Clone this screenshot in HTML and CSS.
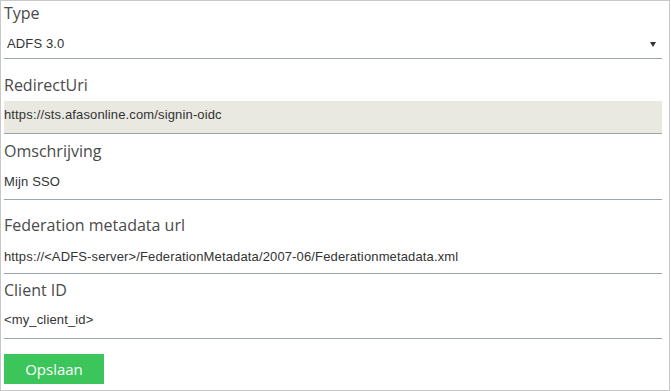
FILE: index.html
```html
<!DOCTYPE html>
<html>
<head>
<meta charset="utf-8">
<link rel="stylesheet" href="styles.css">
</head>
<body>
<div class="panel">
  <div class="field field-type">
    <div class="label">Type</div>
    <div class="value select">
      <span>ADFS 3.0</span>
      <span class="arrow"></span>
    </div>
  </div>
  <div class="field field-redirect">
    <div class="label">RedirectUri</div>
    <div class="value readonly">https://sts.afasonline.com/signin-oidc</div>
  </div>
  <div class="field field-desc">
    <div class="label">Omschrijving</div>
    <div class="value">Mijn SSO</div>
  </div>
  <div class="field field-meta">
    <div class="label">Federation metadata url</div>
    <div class="value">https://&lt;ADFS-server&gt;/FederationMetadata/2007-06/Federationmetadata.xml</div>
  </div>
  <div class="field field-client">
    <div class="label">Client ID</div>
    <div class="value">&lt;my_client_id&gt;</div>
  </div>
  <button class="btn">Opslaan</button>
</div>
</body>
</html>
```
FILE: styles.css
```css
html, body {
  margin: 0;
  padding: 0;
  background: #ffffff;
}
.panel {
  box-sizing: border-box;
  width: 670px;
  height: 391px;
  border: 1px solid #c8c8c8;
  padding: 1px 7px 0 3px;
}
.label {
  font-family: "Open Sans", "Liberation Sans", sans-serif;
  font-size: 16px;
  line-height: 22px;
  color: #4a4a4a;
}
.value {
  font-family: "Liberation Sans", Arial, sans-serif;
  font-size: 13px;
  line-height: 16px;
  letter-spacing: 0.14px;
  color: #333333;
  border-bottom: 1px solid #9ba5ad;
  white-space: nowrap;
}
.select {
  display: flex;
  justify-content: space-between;
  align-items: center;
  padding: 12px 6px 6px 3px;
}
.arrow {
  width: 0;
  height: 0;
  border-left: 3px solid transparent;
  border-right: 3px solid transparent;
  border-top: 5px solid #333333;
  margin-top: 1px;
}
.field-redirect { margin-top: 15px; }
.readonly {
  margin-top: 5px;
  padding: 6px 0 10px 0;
  background: #e9e9e2;
}
.field-desc { margin-top: 6px; }
.field-desc .value { padding: 12px 0 9px 0; }
.field-meta { margin-top: 14px; }
.field-meta .value { padding: 13px 0 8px 0; }
.field-client { margin-top: 5px; }
.field-client .value { padding: 11px 0 10px 0; }
.btn {
  display: block;
  margin: 15px 0 0 0;
  width: 100px;
  height: 30px;
  border: none;
  padding: 0;
  background: #3cc55a;
  color: #ffffff;
  font-family: "Open Sans", "Liberation Sans", sans-serif;
  font-size: 15px;
  line-height: 30px;
}
```
